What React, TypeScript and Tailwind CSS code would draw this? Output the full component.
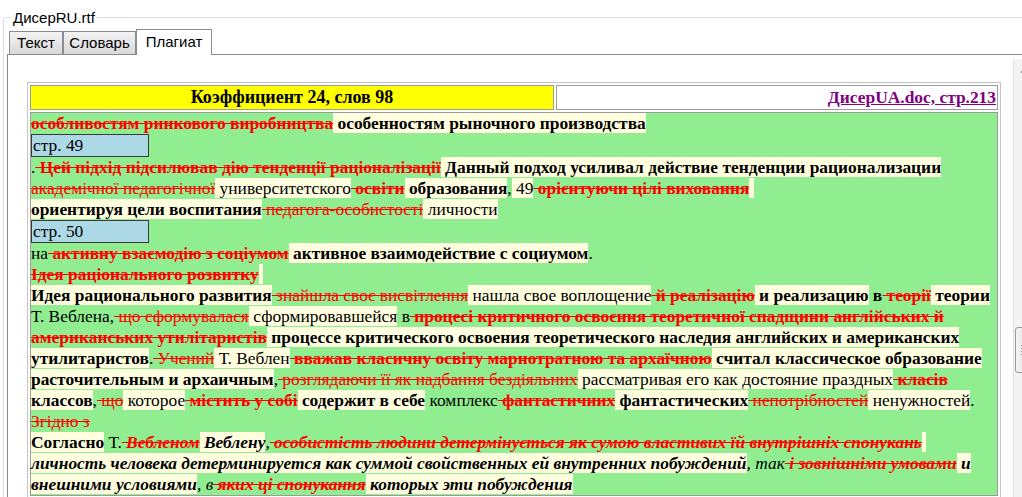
import React from 'react';

// style codes: first char r = removed (red, struck), c = matched (cream), k = plain;
// b = bold, i = italic
type Seg = [string, string];
type Row = Seg[] | { page: string };

const rows: Row[] = [
    [['особливостям ринкового виробництва', 'rb'], [' особенностям рыночного производства', 'cb']],
    { page: 'стр. 49' },
    [['.', 'k'], [' Цей підхід підсилював дію тенденції раціоналізації', 'rb'], [' Данный подход усиливал действие тенденции рационализации', 'cb']],
    [
        ['академічної педагогічної', 'r'], [' университетского', 'c'], [' освіти', 'rb'], [' образования', 'cb'],
        [',', 'k'], [' 49', 'c'], [' орієнтуючи цілі виховання', 'rb'], [' ', 'c'],
    ],
    [['ориентируя цели воспитания', 'cb'], [' педагога-особистості', 'r'], [' личности', 'c']],
    { page: 'стр. 50' },
    [['на', 'k'], [' активну взаємодію з соціумом', 'rb'], [' активное взаимодействие с социумом', 'cb'], ['.', 'k']],
    [['Ідея раціонального розвитку', 'rb'], [' ', 'c']],
    [
        ['Идея рационального развития', 'cb'], [' знайшла своє висвітлення', 'r'], [' нашла свое воплощение', 'c'],
        [' й реалізацію', 'rb'], [' и реализацию', 'cb'], [' в', 'kb'], [' теорії', 'rb'], [' теории', 'cb'],
    ],
    [
        ['Т. Веблена,', 'k'], [' що сформувалася', 'r'], [' сформировавшейся', 'c'], [' в', 'k'],
        [' процесі критичного освоєння теоретичної спадщини англійських й', 'rb'],
    ],
    [['американських утилітаристів', 'rb'], [' процессе критического освоения теоретического наследия английских и американских', 'cb']],
    [
        ['утилитаристов', 'cb'], ['.', 'k'], [' Учений', 'r'], [' Т. Веблен', 'c'],
        [' вважав класичну освіту марнотратною та архаїчною', 'rb'], [' считал классическое образование', 'cb'],
    ],
    [
        ['расточительным и архаичным', 'cb'], [',', 'k'], [' розглядаючи її як надбання бездіяльних', 'r'],
        [' рассматривая его как достояние праздных', 'c'], [' класів', 'rb'],
    ],
    [
        ['классов', 'cb'], [',', 'k'], [' що', 'r'], [' которое', 'c'], [' містить у собі', 'rb'], [' содержит в себе', 'cb'],
        [' комплекс', 'k'], [' фантастичних', 'rb'], [' фантастических', 'cb'], [' непотрібностей', 'r'],
        [' ненужностей', 'c'], ['.', 'k'],
    ],
    [['Згідно з', 'r']],
    [
        ['Согласно', 'cb'], [' Т.', 'k'], [' Вебленом', 'rbi'], [' Веблену', 'cbi'], [',', 'ki'],
        [' особистість людини детермінується як сумою властивих їй внутрішніх спонукань', 'rbi'], [' ', 'c'],
    ],
    [
        ['личность человека детерминируется как суммой свойственных ей внутренних побуждений', 'cbi'],
        [',', 'ki'], [' так', 'ki'], [' і зовнішніми умовами', 'rbi'], [' и', 'cbi'],
    ],
    [['внешними условиями', 'cbi'], [',', 'ki'], [' в', 'ki'], [' яких ці спонукання', 'rbi'], [' которых эти побуждения', 'cbi']],
];

const segClass = (code: string) => {
    const kind = code[0];
    let c = kind === 'r' ? 'text-[#ff0000] line-through' : kind === 'c' ? 'bg-[#ffffe0] text-black' : 'text-black';
    if (code.includes('b')) c += ' font-bold';
    if (code.includes('i')) c += ' italic';
    return c;
};

const tabs = [
    { label: 'Текст', width: 'w-[54px]' },
    { label: 'Словарь', width: 'w-[73px]' },
    { label: 'Плагиат', width: 'w-[76px]' },
];

const Scrollbar: React.FC = () => (
    <div className="w-[21px] shrink-0 flex flex-col bg-[#f3f3f3] border-l border-[#e2e2e2]">
        <div className="h-[21px] flex items-center justify-center">
            <svg width="9" height="6" viewBox="0 0 9 6">
                <path d="M0.5 5.5 L4.5 1 L8.5 5.5 Z" fill="#4d4d4d" />
            </svg>
        </div>
        <div className="mt-[247px] h-[46px] mx-px rounded-[3px] border border-[#9b9b9b] bg-gradient-to-r from-[#f5f5f5] to-[#dadada] flex flex-col items-center justify-center gap-[2px]">
            <div className="w-[7px] h-px bg-[#8a8a8a]" />
            <div className="w-[7px] h-px bg-[#8a8a8a]" />
            <div className="w-[7px] h-px bg-[#8a8a8a]" />
            <div className="w-[7px] h-px bg-[#8a8a8a]" />
        </div>
    </div>
);

const App: React.FC = () => {
    return (
        <div className="w-[1022px] h-[497px] overflow-hidden bg-white pt-[9px] font-['Liberation_Sans',Arial,sans-serif] text-black">
            <fieldset className="ml-[3px] w-[1060px] h-[540px] border border-[#d5dfe5] rounded-[3px] px-[3px]">
                <legend className="ml-[4px] px-[2px] text-[15px] leading-[17px] text-black">ДисерRU.rtf</legend>

                <div className="pt-[3px]">
                    {/* tab strip */}
                    <div className="flex items-end pl-[2px]">
                        {tabs.map((tab, i) =>
                            i === 2 ? (
                                <div
                                    key={tab.label}
                                    className={`${tab.width} h-[26px] -mb-px relative z-10 border border-b-0 border-[#898c95] bg-white text-center text-[15px] leading-[24px]`}
                                >
                                    {tab.label}
                                </div>
                            ) : (
                                <div
                                    key={tab.label}
                                    className={`${tab.width} h-[23px] border border-b-0 border-[#898c95] bg-gradient-to-b from-[#f3f3f3] to-[#d9d9d9] text-center text-[15px] leading-[21px]`}
                                >
                                    {tab.label}
                                </div>
                            )
                        )}
                    </div>

                    {/* tab page */}
                    <div className="w-[1040px] h-[480px] border border-[#898c95] bg-white pl-[3px] pt-[4px]">
                        <div className="flex h-full">
                            <div className="w-[1002px] shrink-0 pl-[16px] pt-[23px] font-['Liberation_Serif','Times_New_Roman',serif] text-[17.4px] leading-[21px]">
                                <table className="w-[974px] border-separate border-spacing-[2px] border border-[#c4c4c4]">
                                    <tbody>
                                        <tr>
                                            <td className="w-[524px] h-[25px] p-0 border border-[#9c9c9c] bg-[#ffff00] text-center font-bold text-[18px]">
                                                Коэффициент 24, слов 98
                                            </td>
                                            <td className="h-[25px] p-0 pr-[1px] border border-[#9c9c9c] bg-white text-right font-bold">
                                                <a className="text-[#800080] underline">ДисерUA.doc, стр.213</a>
                                            </td>
                                        </tr>
                                        <tr>
                                            <td colSpan={2} className="p-0 border border-[#9c9c9c] bg-[#90ee90] align-top">
                                                {rows.map((row, i) =>
                                                    'page' in row ? (
                                                        <div key={i} className="w-[118px] h-[23px] border border-[#3a3a3a] bg-[#add8e6] pl-px">
                                                            {row.page}
                                                        </div>
                                                    ) : (
                                                        <div key={i} className="h-[21px] whitespace-pre">
                                                            {row.map(([text, code], j) => (
                                                                <span key={j} className={segClass(code)}>
                                                                    {text}
                                                                </span>
                                                            ))}
                                                        </div>
                                                    )
                                                )}
                                            </td>
                                        </tr>
                                    </tbody>
                                </table>
                            </div>
                            <Scrollbar />
                        </div>
                    </div>
                </div>
            </fieldset>
        </div>
    );
};

export default App;
